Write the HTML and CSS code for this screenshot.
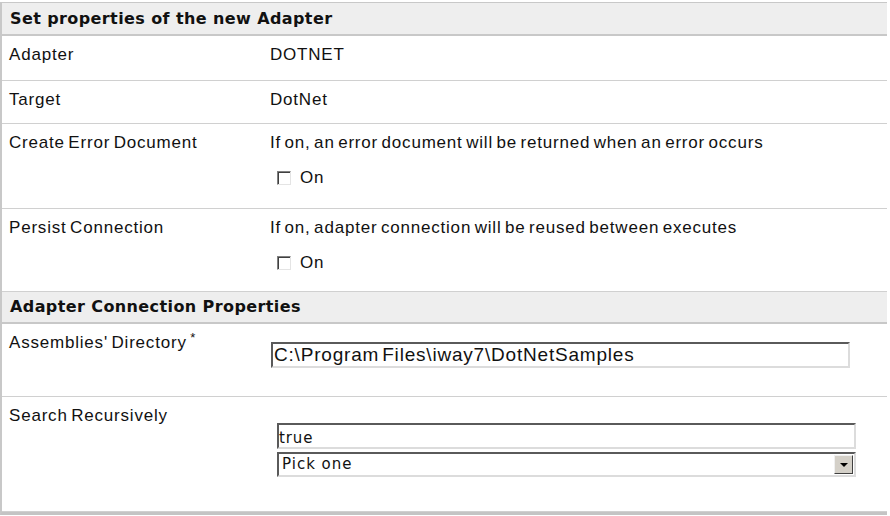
FILE: index.html
```html
<!DOCTYPE html>
<html lang="en">
<head>
  <meta charset="UTF-8" />
  <title>Set properties of the new Adapter</title>
  <link rel="stylesheet" href="styles.css">
</head>
<body>
  <div class="panel">
    <table class="props">
      <tr class="section">
        <th colspan="2">Set properties of the new Adapter</th>
      </tr>
      <tr class="row-adapter">
        <td class="label">Adapter</td>
        <td class="value">DOTNET</td>
      </tr>
      <tr class="row-target">
        <td class="label">Target</td>
        <td class="value">DotNet</td>
      </tr>
      <tr class="row-check">
        <td class="label">Create Error Document</td>
        <td class="value">
          If on, an error document will be returned when an error occurs
          <label class="check"><span class="box"></span>On</label>
        </td>
      </tr>
      <tr class="row-check row-persist">
        <td class="label">Persist Connection</td>
        <td class="value">
          If on, adapter connection will be reused between executes
          <label class="check"><span class="box"></span>On</label>
        </td>
      </tr>
      <tr class="section">
        <th colspan="2">Adapter Connection Properties</th>
      </tr>
      <tr class="row-dir">
        <td class="label">Assemblies' Directory <sup>*</sup></td>
        <td class="value">
          <div class="field field-dir">C:\Program Files\iway7\DotNetSamples</div>
        </td>
      </tr>
      <tr class="row-search">
        <td class="label">Search Recursively</td>
        <td class="value">
          <div class="field field-small">true</div>
          <div class="select">
            <span>Pick one</span>
            <span class="arrow"></span>
          </div>
        </td>
      </tr>
    </table>
  </div>
</body>
</html>
```

FILE: styles.css
```css
* {
  box-sizing: border-box;
}

body {
  margin: 0;
  background: #fff;
  font-family: "Liberation Sans", Arial, sans-serif;
  color: #111;
}

.panel {
  width: 887px;
  margin-top: 2px;
  border-left: 2px solid #c8c8c8;
  border-top: 1px solid #c8c8c8;
  border-bottom: 3px solid #c4c4c4;
}

.props {
  width: 100%;
  border-collapse: collapse;
}

.props td,
.props th {
  padding: 0;
  vertical-align: top;
  font-size: 17px;
  line-height: 18px;
  letter-spacing: 0.8px;
  word-spacing: -2px;
  border-bottom: 1px solid #d0d0d0;
}

.section th {
  height: 32px;
  padding-left: 8px;
  text-align: left;
  vertical-align: middle;
  font-family: "DejaVu Sans", Verdana, sans-serif;
  font-size: 16px;
  letter-spacing: 0.4px;
  word-spacing: 0;
  font-weight: bold;
  color: #111;
  background: #eeeeee;
  border-bottom: 2px solid #c8c8c8;
}

.label {
  width: 258px;
  padding: 10px 0 0 7px !important;
}

.value {
  padding: 10px 0 0 10px !important;
}

.row-adapter td { height: 45px; }
.row-target td { height: 43px; }
.row-check td { height: 85px; }
.row-persist td { height: 83px; }
.row-dir td { height: 73px; }
.row-search td { height: 115px; }

.check {
  display: flex;
  align-items: center;
  gap: 9px;
  margin: 17px 0 0 7px;
}

.box {
  flex: none;
  width: 14px;
  height: 14px;
  background: #fff;
  border: 1px solid;
  border-color: #808080 #e4e4e4 #e4e4e4 #808080;
  box-shadow: inset 1px 1px 0 #404040;
}

sup {
  font-size: 13px;
  line-height: 0;
  vertical-align: 6px;
}

.field,
.select {
  height: 26px;
  background: #fff;
  border: 2px solid;
  border-color: #5a5a5a #dcdcdc #dcdcdc #5a5a5a;
}

.field-dir {
  width: 579px;
  margin: 8px 0 0 1px;
  padding: 2px 0 0 1px;
  font-size: 19px;
  letter-spacing: 0.8px;
  word-spacing: -3px;
  white-space: nowrap;
}

.field-small {
  width: 579px;
  margin: 16px 0 0 7px;
  padding: 4px 0 0 0;
  font-family: "DejaVu Sans", Verdana, sans-serif;
  font-size: 15px;
  letter-spacing: 0.9px;
  word-spacing: 0;
}

.select {
  width: 579px;
  height: 25px;
  margin: 3px 0 0 7px;
  display: flex;
  align-items: center;
  justify-content: space-between;
  padding-left: 3px;
  font-family: "DejaVu Sans", Verdana, sans-serif;
  font-size: 15px;
  letter-spacing: 1px;
  word-spacing: 0;
}

.arrow {
  width: 19px;
  height: 19px;
  margin-right: 1px;
  background: #d4d0c8;
  border: 1px solid;
  border-color: #f0f0f0 #404040 #404040 #f0f0f0;
  position: relative;
}

.arrow::after {
  content: "";
  position: absolute;
  left: 5px;
  top: 7px;
  border-left: 4px solid transparent;
  border-right: 4px solid transparent;
  border-top: 4px solid #000;
}
```
